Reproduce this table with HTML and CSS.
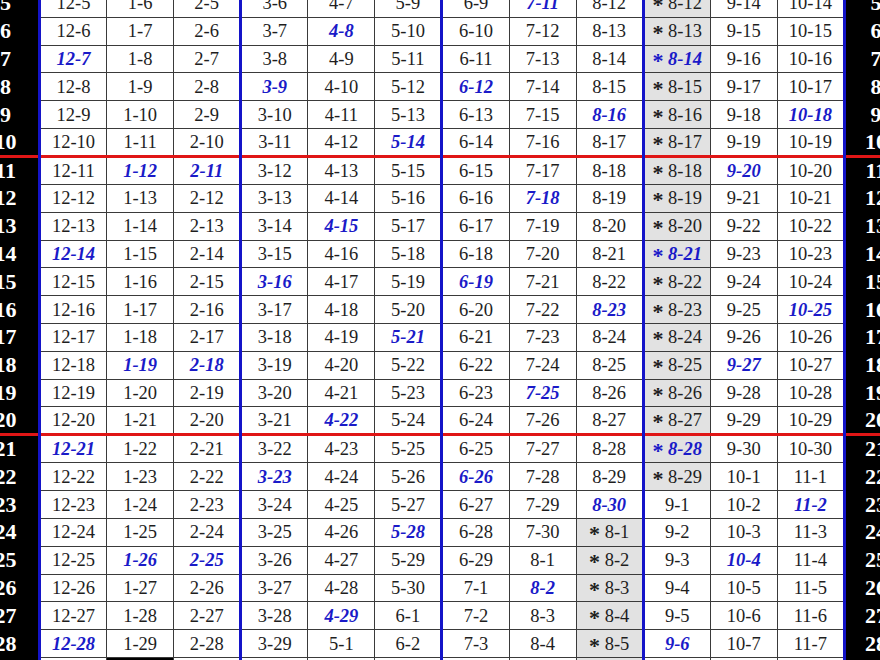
FILE: index.html
```html
<!DOCTYPE html>
<html>
<head>
<meta charset="utf-8">
<link rel="stylesheet" href="styles.css">
</head>
<body>
<table class="chart">
<colgroup>
<col class="c-lab"><col class="c-day"><col class="c-day"><col class="c-day"><col class="c-day"><col class="c-day"><col class="c-day"><col class="c-day"><col class="c-day"><col class="c-day"><col class="c-day"><col class="c-day"><col class="c-day"><col class="c-lab-r">
</colgroup>
<tbody>
<tr><th>5</th><td class="gs">12-5</td><td>1-6</td><td>2-5</td><td class="gs">3-6</td><td>4-7</td><td>5-9</td><td class="gs">6-9</td><td class="b">7-11</td><td>8-12</td><td class="gs g"><span class="ast">*</span> 8-12</td><td>9-14</td><td>10-14</td><th class="gs">5</th></tr>
<tr><th>6</th><td class="gs">12-6</td><td>1-7</td><td>2-6</td><td class="gs">3-7</td><td class="b">4-8</td><td>5-10</td><td class="gs">6-10</td><td>7-12</td><td>8-13</td><td class="gs g"><span class="ast">*</span> 8-13</td><td>9-15</td><td>10-15</td><th class="gs">6</th></tr>
<tr><th>7</th><td class="gs b">12-7</td><td>1-8</td><td>2-7</td><td class="gs">3-8</td><td>4-9</td><td>5-11</td><td class="gs">6-11</td><td>7-13</td><td>8-14</td><td class="gs g b"><span class="ast">*</span> 8-14</td><td>9-16</td><td>10-16</td><th class="gs">7</th></tr>
<tr><th>8</th><td class="gs">12-8</td><td>1-9</td><td>2-8</td><td class="gs b">3-9</td><td>4-10</td><td>5-12</td><td class="gs b">6-12</td><td>7-14</td><td>8-15</td><td class="gs g"><span class="ast">*</span> 8-15</td><td>9-17</td><td>10-17</td><th class="gs">8</th></tr>
<tr><th>9</th><td class="gs">12-9</td><td>1-10</td><td>2-9</td><td class="gs">3-10</td><td>4-11</td><td>5-13</td><td class="gs">6-13</td><td>7-15</td><td class="b">8-16</td><td class="gs g"><span class="ast">*</span> 8-16</td><td>9-18</td><td class="b">10-18</td><th class="gs">9</th></tr>
<tr><th>10</th><td class="gs">12-10</td><td>1-11</td><td>2-10</td><td class="gs">3-11</td><td>4-12</td><td class="b">5-14</td><td class="gs">6-14</td><td>7-16</td><td>8-17</td><td class="gs g"><span class="ast">*</span> 8-17</td><td>9-19</td><td>10-19</td><th class="gs">10</th></tr>
<tr class="sep"><th>11</th><td class="gs">12-11</td><td class="b">1-12</td><td class="b">2-11</td><td class="gs">3-12</td><td>4-13</td><td>5-15</td><td class="gs">6-15</td><td>7-17</td><td>8-18</td><td class="gs g"><span class="ast">*</span> 8-18</td><td class="b">9-20</td><td>10-20</td><th class="gs">11</th></tr>
<tr><th>12</th><td class="gs">12-12</td><td>1-13</td><td>2-12</td><td class="gs">3-13</td><td>4-14</td><td>5-16</td><td class="gs">6-16</td><td class="b">7-18</td><td>8-19</td><td class="gs g"><span class="ast">*</span> 8-19</td><td>9-21</td><td>10-21</td><th class="gs">12</th></tr>
<tr><th>13</th><td class="gs">12-13</td><td>1-14</td><td>2-13</td><td class="gs">3-14</td><td class="b">4-15</td><td>5-17</td><td class="gs">6-17</td><td>7-19</td><td>8-20</td><td class="gs g"><span class="ast">*</span> 8-20</td><td>9-22</td><td>10-22</td><th class="gs">13</th></tr>
<tr><th>14</th><td class="gs b">12-14</td><td>1-15</td><td>2-14</td><td class="gs">3-15</td><td>4-16</td><td>5-18</td><td class="gs">6-18</td><td>7-20</td><td>8-21</td><td class="gs g b"><span class="ast">*</span> 8-21</td><td>9-23</td><td>10-23</td><th class="gs">14</th></tr>
<tr><th>15</th><td class="gs">12-15</td><td>1-16</td><td>2-15</td><td class="gs b">3-16</td><td>4-17</td><td>5-19</td><td class="gs b">6-19</td><td>7-21</td><td>8-22</td><td class="gs g"><span class="ast">*</span> 8-22</td><td>9-24</td><td>10-24</td><th class="gs">15</th></tr>
<tr><th>16</th><td class="gs">12-16</td><td>1-17</td><td>2-16</td><td class="gs">3-17</td><td>4-18</td><td>5-20</td><td class="gs">6-20</td><td>7-22</td><td class="b">8-23</td><td class="gs g"><span class="ast">*</span> 8-23</td><td>9-25</td><td class="b">10-25</td><th class="gs">16</th></tr>
<tr><th>17</th><td class="gs">12-17</td><td>1-18</td><td>2-17</td><td class="gs">3-18</td><td>4-19</td><td class="b">5-21</td><td class="gs">6-21</td><td>7-23</td><td>8-24</td><td class="gs g"><span class="ast">*</span> 8-24</td><td>9-26</td><td>10-26</td><th class="gs">17</th></tr>
<tr><th>18</th><td class="gs">12-18</td><td class="b">1-19</td><td class="b">2-18</td><td class="gs">3-19</td><td>4-20</td><td>5-22</td><td class="gs">6-22</td><td>7-24</td><td>8-25</td><td class="gs g"><span class="ast">*</span> 8-25</td><td class="b">9-27</td><td>10-27</td><th class="gs">18</th></tr>
<tr><th>19</th><td class="gs">12-19</td><td>1-20</td><td>2-19</td><td class="gs">3-20</td><td>4-21</td><td>5-23</td><td class="gs">6-23</td><td class="b">7-25</td><td>8-26</td><td class="gs g"><span class="ast">*</span> 8-26</td><td>9-28</td><td>10-28</td><th class="gs">19</th></tr>
<tr><th>20</th><td class="gs">12-20</td><td>1-21</td><td>2-20</td><td class="gs">3-21</td><td class="b">4-22</td><td>5-24</td><td class="gs">6-24</td><td>7-26</td><td>8-27</td><td class="gs g"><span class="ast">*</span> 8-27</td><td>9-29</td><td>10-29</td><th class="gs">20</th></tr>
<tr class="sep"><th>21</th><td class="gs b">12-21</td><td>1-22</td><td>2-21</td><td class="gs">3-22</td><td>4-23</td><td>5-25</td><td class="gs">6-25</td><td>7-27</td><td>8-28</td><td class="gs g b"><span class="ast">*</span> 8-28</td><td>9-30</td><td>10-30</td><th class="gs">21</th></tr>
<tr><th>22</th><td class="gs">12-22</td><td>1-23</td><td>2-22</td><td class="gs b">3-23</td><td>4-24</td><td>5-26</td><td class="gs b">6-26</td><td>7-28</td><td>8-29</td><td class="gs g"><span class="ast">*</span> 8-29</td><td>10-1</td><td>11-1</td><th class="gs">22</th></tr>
<tr><th>23</th><td class="gs">12-23</td><td>1-24</td><td>2-23</td><td class="gs">3-24</td><td>4-25</td><td>5-27</td><td class="gs">6-27</td><td>7-29</td><td class="b">8-30</td><td class="gs">9-1</td><td>10-2</td><td class="b">11-2</td><th class="gs">23</th></tr>
<tr><th>24</th><td class="gs">12-24</td><td>1-25</td><td>2-24</td><td class="gs">3-25</td><td>4-26</td><td class="b">5-28</td><td class="gs">6-28</td><td>7-30</td><td class="g"><span class="ast">*</span> 8-1</td><td class="gs">9-2</td><td>10-3</td><td>11-3</td><th class="gs">24</th></tr>
<tr><th>25</th><td class="gs">12-25</td><td class="b">1-26</td><td class="b">2-25</td><td class="gs">3-26</td><td>4-27</td><td>5-29</td><td class="gs">6-29</td><td>8-1</td><td class="g"><span class="ast">*</span> 8-2</td><td class="gs">9-3</td><td class="b">10-4</td><td>11-4</td><th class="gs">25</th></tr>
<tr><th>26</th><td class="gs">12-26</td><td>1-27</td><td>2-26</td><td class="gs">3-27</td><td>4-28</td><td>5-30</td><td class="gs">7-1</td><td class="b">8-2</td><td class="g"><span class="ast">*</span> 8-3</td><td class="gs">9-4</td><td>10-5</td><td>11-5</td><th class="gs">26</th></tr>
<tr><th>27</th><td class="gs">12-27</td><td>1-28</td><td>2-27</td><td class="gs">3-28</td><td class="b">4-29</td><td>6-1</td><td class="gs">7-2</td><td>8-3</td><td class="g"><span class="ast">*</span> 8-4</td><td class="gs">9-5</td><td>10-6</td><td>11-6</td><th class="gs">27</th></tr>
<tr><th>28</th><td class="gs b">12-28</td><td>1-29</td><td>2-28</td><td class="gs">3-29</td><td>5-1</td><td>6-2</td><td class="gs">7-3</td><td>8-4</td><td class="g"><span class="ast">*</span> 8-5</td><td class="gs b">9-6</td><td>10-7</td><td>11-7</td><th class="gs">28</th></tr>
<tr><th>29</th><td class="gs">12-29</td><td class="x"></td><td>2-29</td><td class="gs">3-30</td><td>5-2</td><td>6-3</td><td class="gs">7-4</td><td>8-5</td><td class="g"><span class="ast">*</span> 8-6</td><td class="gs">9-7</td><td>10-8</td><td>11-8</td><th class="gs">29</th></tr>
</tbody>
</table>
</body>
</html>
```

FILE: styles.css
```css
html, body {
  margin: 0;
  padding: 0;
  overflow: hidden;
  background: #ffffff;
}

.chart {
  border-collapse: collapse;
  table-layout: fixed;
  width: 934px;
  margin: -11px 0 0 -28px;
  font-family: "Liberation Serif", "DejaVu Serif", serif;
}

.c-lab { width: 67px; }
.c-day { width: 67.08px; }
.c-lab-r { width: 62px; }

.chart tr { height: 27.8px; }

.chart td {
  padding: 0;
  border: 1px solid #3a3a3a;
  text-align: center;
  vertical-align: middle;
  font-family: "Liberation Serif", "DejaVu Serif", serif;
  font-size: 18.5px;
  line-height: 20px;
  color: #1e1e1e;
  white-space: nowrap;
  background: #ffffff;
}

.chart th {
  padding: 0;
  border: 1px solid #000000;
  background: #000000;
  color: #ffffff;
  font-family: "Liberation Serif", "DejaVu Serif", serif;
  font-size: 22px;
  font-weight: bold;
  text-align: center;
  vertical-align: middle;
}

.chart .gs {
  border-left: 3px solid #1414c8;
}

.chart .sep td,
.chart .sep th {
  border-top: 3px solid #e01616;
}

.chart .g {
  background: #e2e2e2;
}

.chart .x {
  background: #000000;
}

.chart .b {
  color: #1a1ac8;
  font-weight: bold;
  font-style: italic;
}

.ast {
  font-weight: bold;
  font-style: normal;
  font-size: 22px;
  vertical-align: -3px;
  line-height: 0;
}
```
